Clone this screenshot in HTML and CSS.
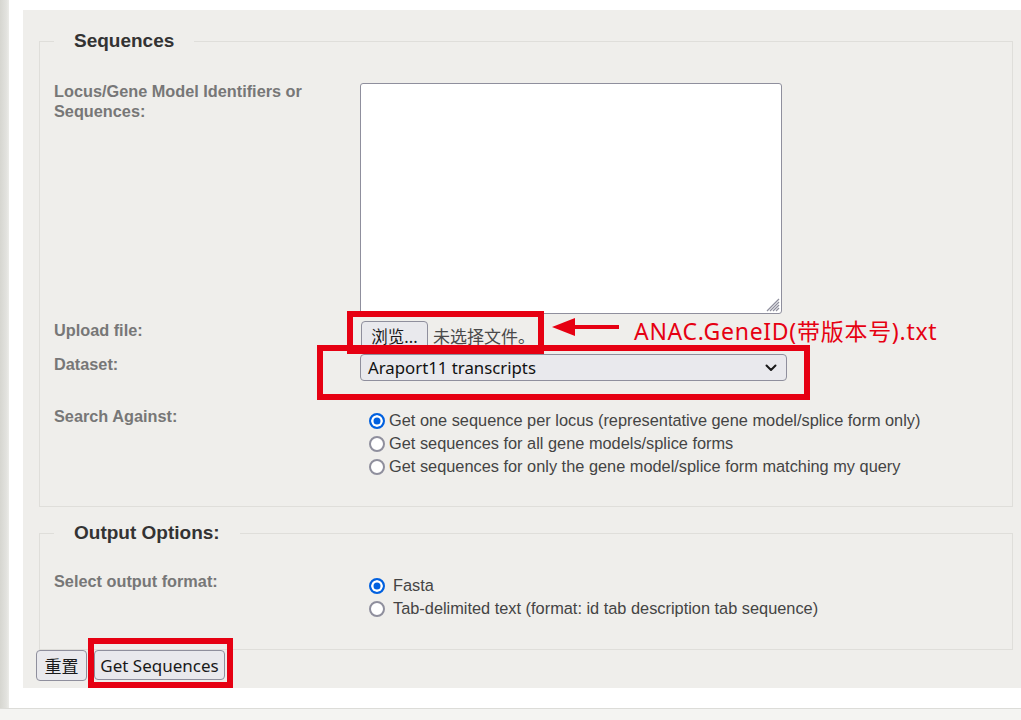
FILE: index.html
```html
<!DOCTYPE html>
<html lang="zh-CN">
<head>
<meta charset="utf-8">
<title>Sequences</title>
<link rel="stylesheet" href="styles.css">
</head>
<body>
<div class="page">
  <div class="edge"></div>
  <div class="main">
    <div class="panel">
      <form class="seq-form">
        <fieldset class="fs fs-seq">
          <legend class="legend">Sequences</legend>
          <div class="row row-ids">
            <div class="lbl">Locus/Gene Model Identifiers or Sequences:</div>
            <div class="ctl">
              <div class="ta-wrap">
                <textarea class="ta"></textarea>
                <svg class="grip" width="14" height="14" viewBox="0 0 14 14"><g stroke="#8f8f9d" stroke-width="1.3"><line x1="1" y1="13" x2="13" y2="1"/><line x1="4" y1="13" x2="13" y2="4"/><line x1="7" y1="13" x2="13" y2="7"/><line x1="10" y1="13" x2="13" y2="10"/></g></svg>
              </div>
            </div>
          </div>
          <div class="row row-file">
            <div class="lbl">Upload file:</div>
            <div class="ctl file-ctl"><span class="btn btn-browse">浏览...</span><span class="file-none">未选择文件。</span></div>
          </div>
          <div class="row row-dataset">
            <div class="lbl">Dataset:</div>
            <div class="ctl">
              <div class="select">
                <span class="select-text">Araport11 transcripts</span>
                <svg class="chev" width="12" height="8" viewBox="0 0 12 8"><path d="M1.5 1.5 L6 6 L10.5 1.5" fill="none" stroke="#1a1a1a" stroke-width="2" stroke-linecap="round" stroke-linejoin="round"/></svg>
              </div>
            </div>
          </div>
          <div class="row row-search">
            <div class="lbl">Search Against:</div>
            <div class="ctl radios">
              <label class="radio-line"><span class="radio checked"></span>Get one sequence per locus (representative gene model/splice form only)</label>
              <label class="radio-line"><span class="radio"></span>Get sequences for all gene models/splice forms</label>
              <label class="radio-line"><span class="radio"></span>Get sequences for only the gene model/splice form matching my query</label>
            </div>
          </div>
        </fieldset>
        <fieldset class="fs fs-out">
          <legend class="legend">Output Options:</legend>
          <div class="row row-format">
            <div class="lbl">Select output format:</div>
            <div class="ctl radios radios-out">
              <label class="radio-line"><span class="radio checked"></span>Fasta</label>
              <label class="radio-line"><span class="radio"></span>Tab-delimited text (format: id tab description tab sequence)</label>
            </div>
          </div>
        </fieldset>
        <div class="actions">
          <span class="btn btn-reset">重置</span>
          <span class="btn btn-submit">Get Sequences</span>
        </div>
      </form>
    </div>
  </div>
</div>
<div class="footer"></div>

<div class="mark mark-file"></div>
<div class="mark mark-dataset"></div>
<div class="mark mark-submit"></div>
<svg class="arrow" width="70" height="22" viewBox="0 0 70 22"><polygon points="0,11 23,2 23,20" fill="#e60012"/><rect x="22" y="9" width="45" height="4" fill="#e60012"/></svg>
<div class="note">ANAC.GeneID(带版本号).txt</div>
</body>
</html>
```

FILE: styles.css
```css
html, body {
  margin: 0;
  padding: 0;
  background: #ffffff;
}
body {
  position: relative;
  width: 1021px;
  height: 720px;
  overflow: hidden;
  font-family: "Liberation Sans", Arial, sans-serif;
}
.page {
  display: flex;
  height: 708px;
}
.edge {
  width: 9px;
  flex: none;
  background: linear-gradient(to right, #d6d6d0, #e2e2de 70%, #ececE8);
}
.main {
  flex: 1;
  padding: 10px 0 0 14px;
}
.panel {
  display: flow-root;
  background: #efeeeb;
  height: 678px;
  padding: 0 8px 0 16px;
  box-sizing: border-box;
}
.seq-form {
  margin: 0;
}
.fs {
  margin: 0;
  padding: 0 14px;
  border: 1px solid #dfdeda;
  min-width: 0;
}
.fs-seq {
  margin-top: 19px;
  padding-bottom: 28px;
}
.fs-out {
  margin-top: 14px;
  padding-bottom: 29px;
}
.legend {
  padding: 0 20px;
  margin-left: 0;
  font-weight: bold;
  font-size: 19px;
  line-height: 24px;
  color: #333333;
}
.row {
  display: grid;
  grid-template-columns: 306px 1fr;
  align-items: start;
}
.lbl {
  font-weight: bold;
  font-size: 16.3px;
  line-height: 20px;
  color: #777777;
}
.row-ids { margin-top: 28px; }
.row-ids .ctl { padding-top: 2px; }
.row-file { margin-top: 6px; }
.row-file .ctl { padding-top: 1px; }
.row-dataset { margin-top: 4px; }
.row-dataset .ctl { padding-top: 0; }
.row-search { margin-top: 25px; }
.row-search .ctl { padding-top: 3px; }
.row-format { margin-top: 26px; }
.row-format .ctl { padding-top: 3px; }

.ta-wrap {
  position: relative;
  width: 422px;
  height: 231px;
}
.ta {
  display: block;
  box-sizing: border-box;
  width: 422px;
  height: 231px;
  margin: 0;
  border: 1px solid #8f8f9d;
  border-radius: 3px;
  background: #ffffff;
  resize: none;
}
.grip {
  position: absolute;
  right: 2px;
  bottom: 2px;
}

.file-ctl {
  display: flex;
  align-items: center;
}
.btn {
  display: inline-flex;
  align-items: center;
  justify-content: center;
  box-sizing: border-box;
  background: #e9e9ed;
  border: 1px solid #8f8f9d;
  border-radius: 4px;
  color: #1a1a1a;
  font-size: 16.5px;
  font-family: "Noto Sans", "Noto Sans CJK SC", sans-serif;
}
.btn-browse {
  width: 67px;
  height: 29px;
  margin-left: 1px;
}
.file-none {
  margin-left: 5px;
  font-family: "Noto Sans", "Noto Sans CJK SC", sans-serif;
  font-size: 17px;
  color: #4a4a4a;
}
.select {
  position: relative;
  display: flex;
  align-items: center;
  box-sizing: border-box;
  width: 427px;
  height: 27px;
  background: #e9e9ed;
  border: 1px solid #8f8f9d;
  border-radius: 4px;
  padding-left: 7px;
}
.select-text {
  font-family: "Noto Sans", "Noto Sans CJK SC", sans-serif;
  font-size: 16.8px;
  color: #111111;
}
.chev {
  position: absolute;
  right: 9px;
  top: 9px;
}
.radios {
  display: flex;
  flex-direction: column;
}
.radio-line {
  display: flex;
  align-items: center;
  height: 23px;
  font-size: 16.35px;
  color: #444444;
  white-space: nowrap;
}
.radio {
  width: 16px;
  height: 16px;
  box-sizing: border-box;
  border-radius: 50%;
  border: 2px solid #8f8f9d;
  background: #ffffff;
  margin: 0 4px 0 9px;
  flex: none;
}
.radio.checked {
  border-color: #0060df;
  background: #0060df;
  box-shadow: inset 0 0 0 2.5px #ffffff;
}
.radios-out .radio {
  margin-right: 8px;
}
.actions {
  display: flex;
  gap: 7px;
  margin: 0 0 0 -3px;
}
.btn-reset {
  width: 51px;
  height: 31px;
  font-size: 17px;
}
.btn-submit {
  width: 131px;
  height: 30px;
  font-size: 17px;
}
.footer {
  height: 11px;
  border-top: 1px solid #dcdcd8;
  background: #f4f4f2;
}

.mark {
  position: absolute;
  box-sizing: border-box;
  border: 6px solid #e60012;
}
.mark-file {
  left: 347px;
  top: 311px;
  width: 197px;
  height: 43px;
}
.mark-dataset {
  left: 317px;
  top: 345px;
  width: 493px;
  height: 55px;
}
.mark-submit {
  left: 88px;
  top: 638px;
  width: 145px;
  height: 50px;
}
.arrow {
  position: absolute;
  left: 552px;
  top: 316px;
}
.note {
  position: absolute;
  left: 634px;
  top: 316px;
  font-family: "Noto Sans", "Noto Sans CJK SC", sans-serif;
  font-size: 23px;
  letter-spacing: 0.72px;
  line-height: 30px;
  color: #e60012;
  white-space: nowrap;
}
```
